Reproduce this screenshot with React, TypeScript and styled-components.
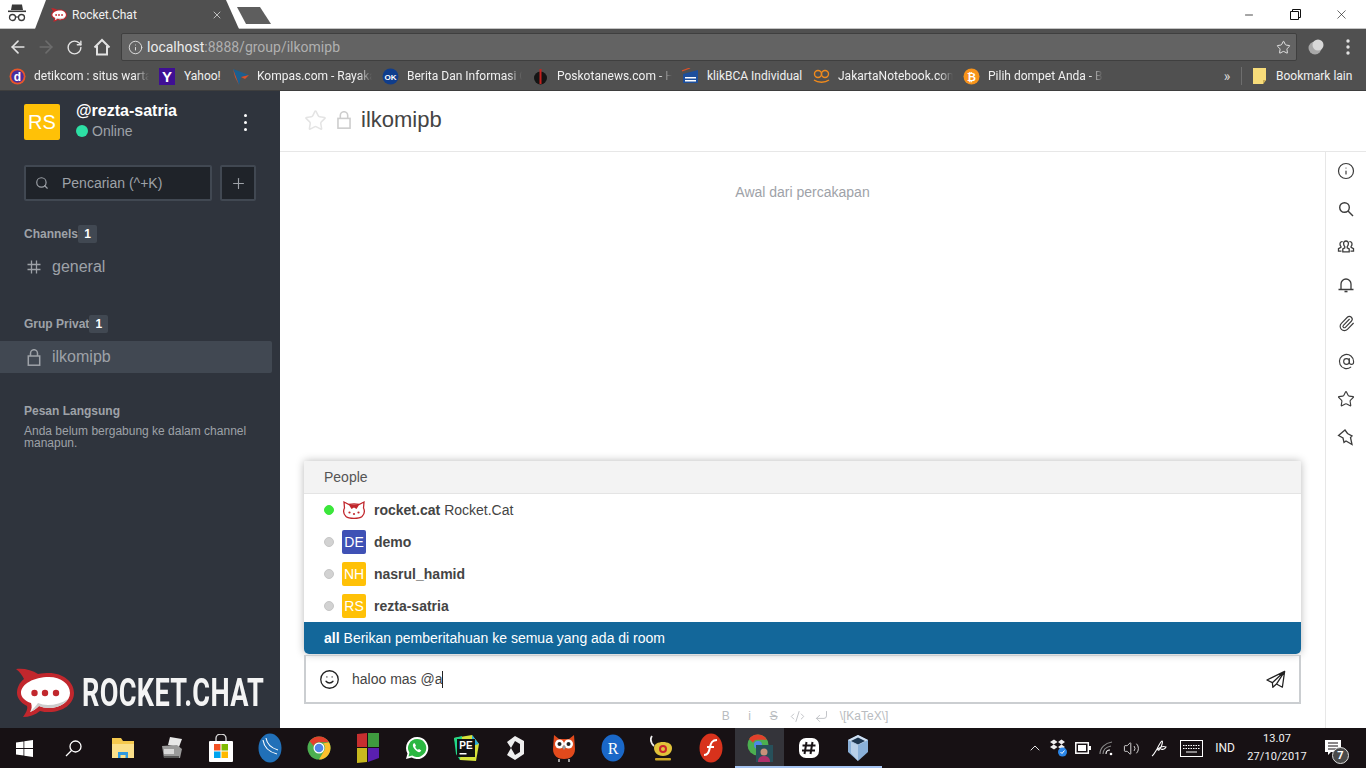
import React from 'react';
import styled, { createGlobalStyle } from 'styled-components';
import { ArrowLeft, ArrowRight, RotateCw, Info, Star, Search, Plus, Paperclip, AtSign, Smile, Minus, X, ChevronUp, Volume2, CodeXml, CornerDownLeft } from 'lucide-react';

const Global = createGlobalStyle`
  html, body { margin: 0; padding: 0; background: #fff; overflow: hidden; }
  * { box-sizing: border-box; }
`;

const Page = styled.div`
  width: 1366px; height: 768px; display: flex; flex-direction: column; overflow: hidden;
  font-family: "Liberation Sans", Arial, sans-serif; color: #444;
`;

/* ---------- browser chrome ---------- */
const TitleBar = styled.div`
  height: 29px; flex: none; display: flex; align-items: flex-end; background: #fff;
  box-shadow: inset 0 -1px 0 #c4c4c4;
`;
const Incognito = styled.div`
  width: 35px; height: 29px; display: flex; align-items: center; padding-left: 7px; padding-bottom: 3px;
`;
const Tab = styled.div`
  width: 204px; height: 29px; background: #505050; display: flex; align-items: center; padding: 0 16px;
  clip-path: polygon(0 100%, 11px 0, 191px 0, 204px 100%);
  font: 12px Roboto, sans-serif; color: #f0f0f0; gap: 5px;
`;
const TabTitle = styled.span`flex: 1;`;
const NewTab = styled.div`
  width: 34px; height: 17px; margin: 0 0 5px -2px; background: #5e5e5e;
  clip-path: polygon(0 0, 23px 0, 34px 100%, 9px 100%);
`;
const Flex1 = styled.div`flex: 1;`;
const WinControls = styled.div`display: flex; align-self: flex-start; height: 29px; padding-right: 2px;`;
const WinButton = styled.div`
  width: 46px; height: 29px; display: flex; align-items: center; justify-content: center; color: #111;
`;
const Toolbar = styled.div`
  height: 33px; flex: none; background: #505050; display: flex; align-items: center; padding: 3px 4px 0;
`;
const NavSlot = styled.div<{ $dim?: boolean; $w?: number }>`
  width: ${p => p.$w ?? 28}px; height: 28px; display: flex; align-items: center; justify-content: center;
  color: ${p => (p.$dim ? '#6c6c6c' : '#e2e2e2')};
`;
const Omnibox = styled.div`
  width: 1176px; height: 28px; margin-left: 5px; background: #636363; border: 1px solid #3f3f3f; border-radius: 2px;
  display: flex; align-items: center; padding: 0 5px 0 6px; font: 14px Roboto, sans-serif; color: #b0b0b0;
`;
const OmniText = styled.div`flex: 1; margin-left: 4px;`;
const Host = styled.span`color: #ececec;`;
const Bookmarks = styled.div`
  height: 29px; flex: none; background: #505050; border-bottom: 1px solid #3e3e3e; display: flex; align-items: center;
  padding-left: 9px; font: 12px Roboto, sans-serif; color: #f0f0f0;
`;
const Bookmark = styled.div<{ $w: number }>`
  width: ${p => p.$w}px; flex: none; display: flex; align-items: center; gap: 8px; overflow: hidden;
`;
const BookIcon = styled.div`width: 17px; height: 17px; flex: none; display: flex; align-items: center; justify-content: center;`;
const BookText = styled.span<{ $w?: number }>`
  white-space: nowrap; overflow: hidden; max-width: ${p => p.$w ?? 115}px;
  ${p => (p.$w ? '' : 'mask-image: linear-gradient(90deg, #000 88%, transparent 100%);')}
`;
const Chevrons = styled.div`margin-left: 103px; width: 22px; color: #d8d8d8; font: 14px Roboto, sans-serif; text-align: center;`;
const BookSep = styled.div`width: 1px; height: 18px; background: #6e6e6e; margin: 0 11px 0 3px;`;
const BookEnd = styled.div`display: flex; align-items: center; gap: 10px;`;

/* ---------- app ---------- */
const AppRow = styled.div`flex: 1; min-height: 0; display: flex;`;
const Sidebar = styled.aside`
  width: 280px; flex: none; background: #2f343d; display: flex; flex-direction: column; padding-top: 13px;
`;
const UserHead = styled.div`display: flex; padding: 0 24px; height: 36px; align-items: center;`;
const Avatar = styled.div<{ $bg: string; $size: number; $font: number }>`
  width: ${p => p.$size}px; height: ${p => p.$size}px; border-radius: 2px; background: ${p => p.$bg}; color: #fff;
  font-size: ${p => p.$font}px; display: flex; align-items: center; justify-content: center; flex: none;
`;
const UserInfo = styled.div`margin-left: 16px; flex: 1; display: flex; flex-direction: column; gap: 2px;`;
const UserName = styled.div`font-size: 16px; line-height: 18px; font-weight: 700; color: #fff; margin-top: -2px;`;
const UserStatus = styled.div`display: flex; align-items: center; gap: 4px; font-size: 14px; line-height: 18px; color: #9ea2a8;`;
const OnlineDot = styled.span`width: 12px; height: 12px; border-radius: 50%; background: #2de0a5;`;
const Kebab = styled.div`display: flex; flex-direction: column; gap: 4px; margin-right: 9px;`;
const KebabDot = styled.span`width: 3px; height: 3px; border-radius: 50%; background: #fff;`;
const SearchRow = styled.div`display: flex; gap: 8px; padding: 0 24px; margin-top: 25px;`;
const SearchBox = styled.div`
  width: 188px; height: 36px; background: #1f2329; border: 2px solid #414852; border-radius: 2px;
  display: flex; align-items: center; padding-left: 9px; gap: 13px; color: #9ea2a8; font-size: 14px;
`;
const AddBox = styled.div`
  width: 36px; height: 36px; background: #1f2329; border: 2px solid #414852; border-radius: 2px;
  display: flex; align-items: center; justify-content: center; color: #9ea2a8;
`;
const SectionTitle = styled.div<{ $mt: number }>`
  display: flex; align-items: center; height: 18px; padding-left: 24px; margin-top: ${p => p.$mt}px;
  font-size: 12px; font-weight: 700; color: #9ea2a8;
`;
const Badge = styled.span`
  width: 19px; height: 18px; background: #414852; border-radius: 2px; color: #fff; font-weight: 700; font-size: 12px;
  display: flex; align-items: center; justify-content: center;
`;
const RoomRow = styled.div<{ $active?: boolean }>`
  width: 272px; height: 32px; margin-top: 8px; display: flex; align-items: center; padding-left: 26px; gap: 10px;
  font-size: 16px; color: #9ea2a8; border-radius: 0 2px 2px 0; background: ${p => (p.$active ? '#414852' : 'transparent')};
`;
const NoDm = styled.div`
  margin-top: 5px; padding: 0 24px; font-size: 12px; line-height: 12px; color: #9ea2a8;
`;
const LogoRow = styled.div`
  margin-top: auto; height: 50px; margin-bottom: 10px; padding-left: 16px; display: flex; align-items: center; gap: 8px;
`;
const LogoMark = styled.div`width: 58px; height: 50px; flex: none; display: flex;`;
const LogoText = styled.span`
  display: inline-block; font: 700 39px/50px Roboto, sans-serif; color: #f4f4f4; transform: scaleX(0.695); transform-origin: left center;
  white-space: nowrap; letter-spacing: 0.5px; flex: none; width: 190px;
`;

const Content = styled.main`flex: 1; min-width: 0; display: flex; flex-direction: column;`;
const RoomHeader = styled.header`
  height: 61px; flex: none; border-bottom: 1px solid #e7e7e7; display: flex; align-items: center; padding: 0 0 2px 24px;
`;
const RoomName = styled.h1`margin: 0 0 0 10px; font-size: 22px; font-weight: 400; color: #444;`;
const RoomIcon = styled.div<{ $ml?: number }>`display: flex; margin-left: ${p => p.$ml ?? 0}px;`;
const ContentRow = styled.div`flex: 1; min-height: 0; display: flex;`;
const ChatCol = styled.div`flex: 1; min-width: 0; display: flex; flex-direction: column;`;
const Messages = styled.div`flex: 1; min-height: 0; display: flex; flex-direction: column; justify-content: space-between; padding-bottom: 1px;`;
const StartNote = styled.div`text-align: center; font-size: 14px; line-height: 16px; color: #9ea2a8; padding-top: 32px;`;
const Popup = styled.div`
  margin: 0 24px; background: #fff; border-radius: 2px 2px 5px 5px; overflow: hidden;
  box-shadow: 0 0 8px rgba(0,0,0,.28);
`;
const PopupTitle = styled.div`
  height: 33px; background: #f3f3f3; border-bottom: 1px solid #e4e4e4; padding-left: 20px; display: flex; align-items: center;
  font-size: 14px; color: #555;
`;
const PopupRow = styled.div`height: 32px; display: flex; align-items: center; padding-left: 20px; font-size: 14px; color: #444;`;
const StatusDot = styled.span<{ $on?: boolean }>`
  width: 10px; height: 10px; border-radius: 50%; margin-right: 8px; flex: none;
  background: ${p => (p.$on ? '#3be63b' : '#d2d2d2')}; border: 1px solid ${p => (p.$on ? '#3be63b' : '#c6c6c6')};
`;
const Strong = styled.b`font-weight: 700; margin-right: 4px;`;
const UserStrong = styled(Strong)`margin-left: 8px;`;
const ActiveRow = styled(PopupRow)`background: #13679a; color: #fff; margin-top: 0;`;
const CatWrap = styled.div`width: 24px; height: 24px; flex: none; display: flex; align-items: center;`;
const Composer = styled.div`
  height: 49px; flex: none; margin: 0 24px; border: 2px solid #cbced1; border-top-width: 1px; display: flex; align-items: center;
  padding: 0 13px 0 13px; font-size: 14px; color: #444;
`;
const ComposerText = styled.div`flex: 1; display: flex; align-items: center; margin-left: 12px;`;
const Caret = styled.span`width: 1px; height: 17px; background: #222; display: inline-block;`;
const FormatRow = styled.div`
  height: 24px; flex: none; display: flex; align-items: center; justify-content: center; gap: 12px; font-size: 12px; color: #b9bcc0; padding-left: 3px;
`;
const FormatMark = styled.span<{ $strike?: boolean }>`
  width: 12px; display: flex; justify-content: center; ${p => p.$strike && 'text-decoration: line-through;'}
  svg { flex: none; }
`;
const RightBar = styled.nav`
  width: 41px; flex: none; border-left: 1px solid #e7e7e7; display: flex; flex-direction: column; align-items: center; color: #3c3c3c;
`;
const RightIcon = styled.div`height: 38px; flex: none; display: flex; align-items: center; justify-content: center;`;

/* ---------- taskbar ---------- */
const Taskbar = styled.footer`
  height: 40px; flex: none; background: #171114; display: flex; align-items: stretch; color: #f2f2f2;
  font: 12px Roboto, sans-serif;
`;
const TaskSlot = styled.div<{ $w?: number; $running?: boolean; $active?: boolean }>`
  width: ${p => p.$w ?? 49}px; flex: none; display: flex; align-items: center; justify-content: center; position: relative;
  background: ${p => (p.$active ? '#34343a' : 'transparent')};
  ${p => p.$running && `box-shadow: inset 0 -2px 0 #a6c4f2;`}
`;
const ClockBox = styled.div`text-align: center; line-height: 18px; font-size: 11px; letter-spacing: 0.1px;`;
const NotifCount = styled.span`
  position: absolute; right: 8px; bottom: 4px; width: 17px; height: 17px; border-radius: 50%; background: #4a4a4a; border: 1px solid #ddd;
  color: #fff; font: 700 11px/15px Roboto, sans-serif; text-align: center;
`;

/* ---------- drawings ---------- */
const RocketMark = ({ w, h }: { w: number; h: number }) => (
  <svg width={w} height={h} viewBox="0 0 58 50">
    <path fill="#c1272d" d="M0 1C8 0 16 2 22 6 C26 5 30 5 33 5 C47 5 58 14 58 25 C58 36 47 44 33 44 C30 44 27 44 24 43 C19 47 13 49 7 49 C10 45 12 41 11 38 C5 35 1 30 1 25 C1 20 3 15 8 11 C6 7 4 4 0 1Z" />
    <path fill="#fff" d="M33 9C45 9 54 16 54 25 C54 33 45 40 33 40 C29 40 26 39 23 38 C20 41 17 43 14 44 C16 41 16 38 15 35 C9 33 5 29 5 25 C5 16 18 9 33 9Z" />
    <path fill="#ccc" d="M14 44 C17 43 20 41 23 38 C26 39 29 40 33 40 C42 40 49 36 52 31 C46 35 39 37 32 37 C28 37 25 36 22 35 C20 38 17 41 14 44Z" />
    <circle cx="18.5" cy="25" r="3.2" fill="#c1272d" /><circle cx="29" cy="25" r="3.2" fill="#c1272d" /><circle cx="40" cy="25" r="3.2" fill="#c1272d" />
  </svg>
);
const Spy = () => (
  <svg width="20" height="20" viewBox="0 0 20 20" fill="#3a3a3a">
    <path d="M5 1.5 H15 L16 7 H4Z" /><rect x="1" y="7.5" width="18" height="1.6" />
    <circle cx="5.5" cy="14.5" r="3" fill="none" stroke="#3a3a3a" strokeWidth="1.3" />
    <circle cx="14.5" cy="14.5" r="3" fill="none" stroke="#3a3a3a" strokeWidth="1.3" />
    <path d="M8.5 14 H11.5" stroke="#3a3a3a" strokeWidth="1.2" />
  </svg>
);
const Restore = () => (
  <svg width="11" height="11" viewBox="0 0 11 11" fill="none" stroke="#111"><path d="M.5 2.5h8v8h-8zM2.5 2.5v-2h8v8h-2" /></svg>
);
const HomeIcon = () => (
  <svg width="18" height="18" viewBox="0 0 18 18" fill="none" stroke="#e2e2e2" strokeWidth="2"><path d="M1.500 9.500 9 2l7.500 7.500M4 8v8.500h10V8" /></svg>
);
const Badge3d = () => (
  <svg width="18" height="18" viewBox="0 0 18 18"><circle cx="8" cy="10" r="6.500" fill="#a8a8a8" /><circle cx="11" cy="7" r="5.500" fill="#d8d8d8" /></svg>
);
const Dots = () => (
  <svg width="4" height="16" viewBox="0 0 4 16" fill="#e2e2e2"><circle cx="2" cy="2" r="1.700" /><circle cx="2" cy="8" r="1.700" /><circle cx="2" cy="14" r="1.700" /></svg>
);
const PageFolder = () => (
  <svg width="13" height="16" viewBox="0 0 13 16"><path d="M0 0h13v12l-3 4H0z" fill="#f7dc7a" /><path d="M13 12h-3v4z" fill="#c9ad55" /></svg>
);
const LockGlyph = ({ color, w, h }: { color: string; w: number; h: number }) => (
  <svg width={w} height={h} viewBox="0 0 13 17" fill="none" stroke={color} strokeWidth="1.500"><rect x=".8" y="7" width="11.400" height="9.200" /><path d="M3 7V4.200a3.500 3.500 0 0 1 7 0V7" /></svg>
);
const Fav = ({ kind }: { kind: string }) => {
  switch (kind) {
    case 'detik': return <svg width="17" height="17" viewBox="0 0 17 17"><circle cx="8.5" cy="8.5" r="8" fill="#e8562a" /><circle cx="8.5" cy="8.5" r="6.2" fill="#4a2c9c" /><text x="8.5" y="12.5" fontSize="12" fontWeight="700" fill="#fff" textAnchor="middle" fontFamily="Liberation Sans">d</text></svg>;
    case 'yahoo': return <svg width="17" height="17" viewBox="0 0 17 17"><rect width="16" height="17" fill="#3f0f94" /><text x="8" y="14" fontSize="15" fontWeight="700" fill="#fff" textAnchor="middle" fontFamily="Liberation Sans">Y</text></svg>;
    case 'kompas': return <svg width="17" height="17" viewBox="0 0 17 17"><path d="M1 1 17 7 9 9 7 17Z" fill="#1c5f8f" /><path d="M1 1 7 17 3 9Z" fill="#d8502a" /><path d="M17 7 9 9 13 11Z" fill="#d8502a" /></svg>;
    case 'ok': return <svg width="17" height="17" viewBox="0 0 17 17"><circle cx="8.5" cy="8.5" r="8" fill="#0f3d8c" /><text x="8.5" y="11.5" fontSize="8" fontWeight="700" fill="#fff" textAnchor="middle" fontFamily="Liberation Sans">OK</text></svg>;
    case 'pos': return <svg width="17" height="17" viewBox="0 0 17 17"><circle cx="8.5" cy="10" r="6.500" fill="#151515" /><rect x="7.500" y="1" width="2" height="15" fill="#c4221f" /></svg>;
    case 'bca': return <svg width="17" height="17" viewBox="0 0 17 17"><path d="M1 6 16 2V15H1Z" fill="#1d4f9c" /><path d="M3 9h11v1.500H3zM3 12h11v1.500H3z" fill="#fff" /><path d="M0 3 8 0" stroke="#d8502a" strokeWidth="1.300" /></svg>;
    case 'jakarta': return <svg width="17" height="17" viewBox="0 0 17 17" fill="none" stroke="#f08a1c" strokeWidth="1.400"><circle cx="5" cy="6" r="3.500" /><circle cx="12" cy="6" r="3.500" /><path d="M1 12c4 3 11 3 15 0" /></svg>;
    case 'btc': return <svg width="17" height="17" viewBox="0 0 17 17"><circle cx="8.5" cy="8.5" r="8" fill="#f7931a" /><text x="8.5" y="12.5" fontSize="11" fontWeight="700" fill="#fff" textAnchor="middle" fontFamily="Liberation Sans">₿</text></svg>;
    default: return null;
  }
};
const BOOKMARKS = [
  { k: 'detik', t: 'detikcom : situs warta', w: 150 },
  { k: 'yahoo', t: 'Yahoo!', w: 73, full: 40 },
  { k: 'kompas', t: 'Kompas.com - Rayakan', w: 150 },
  { k: 'ok', t: 'Berita Dan Informasi Ok', w: 150 },
  { k: 'pos', t: 'Poskotanews.com - Harian', w: 150 },
  { k: 'bca', t: 'klikBCA Individual', w: 131, full: 100 },
  { k: 'jakarta', t: 'JakartaNotebook.com', w: 150 },
  { k: 'btc', t: 'Pilih dompet Anda - Bitcoin', w: 150 },
];
const Hashish = () => (
  <svg width="16" height="16" viewBox="0 0 16 16" fill="none" stroke="#9ea2a8" strokeWidth="1.300"><path d="M5.500 1.500v13M10.500 1.500v13M1.500 5.500h13M1.500 10.500h13" /></svg>
);
const SearchThin = () => (
  <svg width="16" height="16" viewBox="0 0 16 16" fill="none" stroke="#3c3c3c" strokeWidth="1.400"><circle cx="6.500" cy="6.500" r="4.800" /><path d="M10 10l5 5" /></svg>
);
const Group = () => (
  <svg width="18" height="18" viewBox="0 0 18 18" fill="none" stroke="#3c3c3c" strokeWidth="1.300">
    <path d="M9 3a2.400 2.400 0 0 1 2.400 2.600c0 1.400-.6 2.400-1.200 3v1.200l2 1v3H5.800v-3l2-1V8.600c-.6-.6-1.200-1.600-1.200-3A2.400 2.400 0 0 1 9 3z" />
    <path d="M5.600 3.600C4 3.400 3 4.500 3 5.900c0 1.200.4 2 .9 2.500v1L1.500 10.600v2.500h3M12.400 3.600C14 3.400 15 4.500 15 5.900c0 1.200-.4 2-.9 2.500v1l2.400 1.200v2.500h-3" />
  </svg>
);
const BellLine = () => (
  <svg width="18" height="18" viewBox="0 0 18 18" fill="none" stroke="#3c3c3c" strokeWidth="1.300"><path d="M4 13V8a5 5 0 0 1 10 0v5M1.500 13.500h15" /><path d="M7.500 15.500h3" strokeWidth="1.600" /></svg>
);
const PinLine = () => (
  <svg width="18" height="18" viewBox="0 0 18 18" fill="none" stroke="#3c3c3c" strokeWidth="1.300"><path d="M1.500 7.500 8 2l2.500 3.500 4.500 2.500-1.500 1.500 1.500 7-6-3.500-2 1.500-1-4.500z" /></svg>
);
const Plane = () => (
  <svg width="20" height="19" viewBox="0 0 22 20" fill="none" stroke="#222" strokeWidth="1.400" strokeLinejoin="round"><path d="M1 10.500 20.500 1 18 18.500 11.500 15 7.500 18.500 7 13.500zM7 13.500 20.500 1 11.500 15" /></svg>
);
const RocketCat = () => (
  <svg width="24" height="20" viewBox="0 0 24 20" fill="none" stroke="#c1272d" strokeWidth="1.300">
    <path d="M2 2 7 4.500C10 3.800 14 3.800 17 4.500L22 2 21.500 8C23 11 22.500 14 20 16.500 17 19 7 19 4 16.500 1.500 14 1 11 2.500 8Z" fill="#fff" />
    <path d="M7 5C10 4.400 14 4.400 17 5L14.500 9 12 7.500 9.500 9Z" fill="#c1272d" stroke="none" />
    <circle cx="7.500" cy="12.500" r="1.100" fill="#c1272d" stroke="none" /><circle cx="12" cy="14" r="1.100" fill="#c1272d" stroke="none" /><circle cx="16.500" cy="12.500" r="1.100" fill="#c1272d" stroke="none" />
  </svg>
);
const WinLogo = () => (
  <svg width="17" height="17" viewBox="0 0 17 17" fill="#fff"><path d="M0 2.500 7.500 1.400V8H0zM8.300 1.300 17 0V8H8.300zM0 9h7.500v6.600L0 14.500zM8.300 9H17v8l-8.700-1.300z" /></svg>
);
const TaskSearch = () => (
  <svg width="18" height="18" viewBox="0 0 18 18" fill="none" stroke="#fff" strokeWidth="1.300"><circle cx="10.500" cy="7.500" r="5.500" /><path d="M6.500 11.500 1 17" /></svg>
);
const Explorer = () => (
  <svg width="22" height="22" viewBox="0 0 22 22"><path d="M0 1h9l2 3h11v17H0z" fill="#f5c94e" /><rect y="7" width="22" height="14" fill="#fbe08a" /><path d="M6 21v-6h10v6h-2.500v-3h-5v3z" fill="#2f9ae0" /></svg>
);
const Fax = () => (
  <svg width="22" height="24" viewBox="0 0 22 24"><path d="M9 1 21 3 18 11 7 9z" fill="#e8e8e8" /><path d="M1 10 16 9 21 13 19 22 3 22z" fill="#9a9a9a" /><path d="M3 13h10v5H3z" fill="#d8d8d8" /><path d="M3 20h15v2H3z" fill="#555" /></svg>
);
const Store = () => (
  <svg width="24" height="28" viewBox="0 0 24 28"><path d="M7 7V4a5 4 0 0 1 10 0v3" fill="none" stroke="#ddd" strokeWidth="1.300" /><rect y="7" width="24" height="21" rx="1" fill="#fff" /><rect x="5" y="10" width="6.500" height="6.500" fill="#f25022" /><rect x="12.500" y="10" width="6.500" height="6.500" fill="#7fba00" /><rect x="5" y="17.500" width="6.500" height="6.500" fill="#00a4ef" /><rect x="12.500" y="17.500" width="6.500" height="6.500" fill="#ffb900" /></svg>
);
const Mikro = () => (
  <svg width="24" height="30" viewBox="0 0 24 30"><ellipse cx="12" cy="15" rx="11.500" ry="14.500" fill="#2170b8" /><path d="M5 7c1 7 6 12 14 14M8 5c1 6 5 10 12 12" fill="none" stroke="#fff" strokeWidth="1.100" /></svg>
);
const Chrome = () => (
  <svg width="24" height="26" viewBox="0 0 24 24"><circle cx="12" cy="12" r="11.500" fill="#4caf50" /><path d="M12 .5a11.500 11.500 0 0 1 10 5.800H12a5.700 5.700 0 0 0-5.300 3.700L2.600 5.300A11.500 11.500 0 0 1 12 .5z" fill="#e2402b" /><path d="M22 6.300A11.500 11.500 0 0 1 12 23.500l5-8.500a5.700 5.700 0 0 0-1-7.500z" fill="#fbc02d" /><circle cx="12" cy="12" r="5.500" fill="#fff" /><circle cx="12" cy="12" r="4.300" fill="#4f86e8" /></svg>
);
const Tiles = () => (
  <svg width="22" height="30" viewBox="0 0 22 30"><path d="M0 1 10 0V14L0 14z" fill="#c62f2f" /><path d="M11 0 22 0V14L11 14z" fill="#3f9b3f" /><path d="M0 15h10v14L0 30z" fill="#c8b81e" /><path d="M11 15h11V25L11 29z" fill="#5a1fb0" /></svg>
);
const Whats = () => (
  <svg width="24" height="26" viewBox="0 0 24 24"><path d="M12 1a11 11 0 0 0-9.500 16.500L1 23l5.700-1.500A11 11 0 1 0 12 1z" fill="#fff" /><path d="M12 3a9 9 0 0 0-7.600 13.800L3.500 20.500l3.800-1A9 9 0 1 0 12 3z" fill="#2bb741" /><path d="M8.500 7.500c-1 1-1 3 1 5.500s4 3.500 5.500 3l1.300-1.500-2.300-1.500-1 .8c-1 0-2.500-1.800-2.800-3l.8-1L9.800 7.300z" fill="#fff" /></svg>
);
const PyCharmIcon = () => (
  <svg width="28" height="28" viewBox="0 0 28 28"><path d="M2 4 20 1 27 10 24 27 8 26z" fill="#d6e23a" /><path d="M20 1 27 10 20 12z" fill="#2aa8d8" /><path d="M2 4 10 2 8 26 4 20z" fill="#21d789" /><rect x="5" y="5" width="18" height="18" fill="#111" /><text x="14" y="15" fontSize="10" fontWeight="700" fill="#fff" textAnchor="middle" fontFamily="Liberation Sans">PE</text><rect x="7.500" y="19" width="7" height="1.500" fill="#fff" /></svg>
);
const Unity = () => (
  <svg width="18" height="24" viewBox="0 0 18 24"><path d="M9 0 18 5V18L9 24 1 19 5 12 1 6z" fill="#eee" /><path d="M9 5 5 12 9 19 14 16V8z" fill="#171114" /></svg>
);
const Owl = () => (
  <svg width="24" height="28" viewBox="0 0 24 28"><path d="M2 1 7 5H17L22 1 23 15C23 22 18 25 12 25 6 25 1 22 1 15z" fill="#e24a1c" /><circle cx="7.500" cy="10" r="4.500" fill="#fff" /><circle cx="16.500" cy="10" r="4.500" fill="#fff" /><circle cx="7.500" cy="10" r="2" fill="#222" /><circle cx="16.500" cy="10" r="2" fill="#222" /><path d="M12 11l-2 2 2 3 2-3z" fill="#999" /><path d="M7 25v3M17 25v3" stroke="#ccc" strokeWidth="1.500" /></svg>
);
const RLogo = () => (
  <svg width="24" height="28" viewBox="0 0 24 28"><ellipse cx="12" cy="14" rx="11.500" ry="13.500" fill="#1a68c8" /><text x="12" y="20" fontSize="16" fill="#fff" textAnchor="middle" fontFamily="Liberation Serif">R</text></svg>
);
const Teapot = () => (
  <svg width="24" height="28" viewBox="0 0 24 28"><path d="M2 2c-2 3-1 7 2 10" fill="none" stroke="#eee" strokeWidth="1.800" /><path d="M4 14c0-4 4-6 9-6s9 2 9 6-3 8-9 8-9-4-9-8z" fill="#e0c23a" /><circle cx="13" cy="15" r="4" fill="#c9252d" /><circle cx="13" cy="15" r="2" fill="#e0c23a" /><rect x="5" y="24" width="16" height="2.500" rx="1" fill="#c9a526" /></svg>
);
const Flash = () => (
  <svg width="24" height="30" viewBox="0 0 24 30"><ellipse cx="12" cy="15" rx="11.500" ry="14.500" fill="#d8321c" /><path d="M18 7c-5 0-6 3-7 7-1 5-2 8-6 8" fill="none" stroke="#fff" strokeWidth="2" /><path d="M8 14h7" stroke="#fff" strokeWidth="2" /></svg>
);
const ChromePhoto = () => (
  <svg width="26" height="28" viewBox="0 0 26 28"><circle cx="11" cy="11" r="10.500" fill="#4caf50" /><path d="M11 .5a10.500 10.500 0 0 1 9 5.300H11a5 5 0 0 0-5 3L2 5A10.500 10.500 0 0 1 11 .5z" fill="#e2402b" /><circle cx="11" cy="11" r="4" fill="#4f86e8" /><rect x="9" y="11" width="17" height="17" fill="#27505a" /><circle cx="17" cy="18" r="3.500" fill="#c9917a" /><path d="M11 28c0-5 3-6 6-6s6 1 6 6z" fill="#b0306a" /></svg>
);
const Slack = () => (
  <svg width="20" height="20" viewBox="0 0 20 20"><rect width="20" height="20" rx="7" fill="#fff" /><path d="M7.500 4l-2 12M13.500 4l-2 12M3.500 7.500h13M3 12.500h13" stroke="#171114" strokeWidth="2" /></svg>
);
const VBox = () => (
  <svg width="22" height="28" viewBox="0 0 22 28"><path d="M11 1 21 6V18L11 27 1 18V6z" fill="#8ab0d8" /><path d="M11 1 21 6 11 11 1 6z" fill="#cfe0f2" /><path d="M4 7l7-3.500L18 7l-7 3.500z" fill="#1d3650" /><path d="M11 11V27L4 19V8z" fill="#b8cfe8" /></svg>
);
const Dropboxy = () => (
  <svg width="18" height="18" viewBox="0 0 18 18" fill="#eee"><path d="M0 3 4 .5 7.500 3 3.800 5.500zM8 3 11.500.5 15 3 11.500 5.500zM0 8 3.800 5.500 7.500 8 4 10.500zM8 8l3.500-2.500L15 8l-3.500 2.500z" /><circle cx="12.500" cy="13" r="4.500" fill="#2a86e8" /><path d="M10.500 13l1.500 1.500 2.500-3" stroke="#fff" fill="none" /></svg>
);
const Batt = () => (
  <svg width="16" height="12" viewBox="0 0 16 12"><rect x=".8" y=".8" width="12.500" height="10.400" fill="none" stroke="#fff" strokeWidth="1.500" /><rect x="3" y="3" width="8" height="6" fill="#fff" /><rect x="14" y="4" width="2" height="4" fill="#fff" /></svg>
);
const Wifi = () => (
  <svg width="16" height="16" viewBox="0 0 16 16" fill="none" stroke="#8a8a8a" strokeWidth="1.100"><path d="M1 14C1 8 6 3 13 2M4 14c0-4 3-7 8-8" /><path d="M7 14c0-2 1-4 4-4" stroke="#fff" /><circle cx="12" cy="14" r="1.300" fill="#fff" stroke="none" /></svg>
);
const Pen = () => (
  <svg width="18" height="18" viewBox="0 0 18 18" fill="none" stroke="#fff" strokeWidth="1.100"><path d="M1 17c2-1 3-4 5-7 2-4 4-8 5-8s0 5-2 8c-1 2-3 1-2 0 2-2 5-3 8-2-1 2-3 3-5 2" /></svg>
);
const Keyboard = () => (
  <svg width="23" height="17" viewBox="0 0 23 17" fill="none" stroke="#fff"><rect x=".5" y=".5" width="22" height="16" /><path d="M3 5.500h17M3 8.500h17" strokeDasharray="1.500 1" /><path d="M6 12h11" /></svg>
);
const Notif = () => (
  <svg width="16" height="16" viewBox="0 0 16 16"><path d="M0 0h16v12H6l-3 3v-3H0z" fill="#fff" /><path d="M3 3h10M3 6h10M3 9h10" stroke="#171114" /></svg>
);

export default function App() {
  return (
    <Page>
      <Global />
      <TitleBar>
        <Incognito><Spy /></Incognito>
        <Tab>
          <RocketMark w={16} h={14} />
          <TabTitle>Rocket.Chat</TabTitle>
          <X size={12} color="#bdbdbd" />
        </Tab>
        <NewTab />
        <Flex1 />
        <WinControls>
          <WinButton><Minus size={12} strokeWidth={1.5} /></WinButton>
          <WinButton><Restore /></WinButton>
          <WinButton><X size={15} strokeWidth={1} /></WinButton>
        </WinControls>
      </TitleBar>
      <Toolbar>
        <NavSlot><ArrowLeft size={20} strokeWidth={2} /></NavSlot>
        <NavSlot $dim><ArrowRight size={20} strokeWidth={2} /></NavSlot>
        <NavSlot><RotateCw size={17} strokeWidth={2} /></NavSlot>
        <NavSlot><HomeIcon /></NavSlot>
        <Omnibox>
          <Info size={15} color="#e2e2e2" strokeWidth={1.5} />
          <OmniText><Host>localhost</Host>:8888/group/ilkomipb</OmniText>
          <Star size={15} color="#eaeaea" strokeWidth={1.5} />
        </Omnibox>
        <NavSlot $w={38}><Badge3d /></NavSlot>
        <NavSlot $w={26}><Dots /></NavSlot>
      </Toolbar>
      <Bookmarks>
        {BOOKMARKS.map(b => (
          <Bookmark key={b.k} $w={b.w}>
            <BookIcon><Fav kind={b.k} /></BookIcon>
            <BookText $w={b.full}>{b.t}</BookText>
          </Bookmark>
        ))}
        <Chevrons>»</Chevrons>
        <BookSep />
        <BookEnd>
          <PageFolder />
          <span>Bookmark lain</span>
        </BookEnd>
      </Bookmarks>
      <AppRow>
        <Sidebar>
          <UserHead>
            <Avatar $bg="#ffc107" $size={36} $font={20}>RS</Avatar>
            <UserInfo>
              <UserName>@rezta-satria</UserName>
              <UserStatus><OnlineDot />Online</UserStatus>
            </UserInfo>
            <Kebab><KebabDot /><KebabDot /><KebabDot /></Kebab>
          </UserHead>
          <SearchRow>
            <SearchBox><Search size={14} color="#9ea2a8" />Pencarian (^+K)</SearchBox>
            <AddBox><Plus size={17} strokeWidth={1.6} /></AddBox>
          </SearchRow>
          <SectionTitle $mt={24}>Channels<Badge>1</Badge></SectionTitle>
          <RoomRow><Hashish />general</RoomRow>
          <SectionTitle $mt={32}>Grup Privat<Badge>1</Badge></SectionTitle>
          <RoomRow $active><LockGlyph color="#9ea2a8" w={16} h={17} />ilkomipb</RoomRow>
          <SectionTitle $mt={29}>Pesan Langsung</SectionTitle>
          <NoDm>Anda belum bergabung ke dalam channel manapun.</NoDm>
          <LogoRow>
            <LogoMark><RocketMark w={58} h={50} /></LogoMark>
            <LogoText>ROCKET.CHAT</LogoText>
          </LogoRow>
        </Sidebar>
        <Content>
          <RoomHeader>
            <Star size={23} color="#e4e4e4" strokeWidth={1.6} />
            <RoomIcon $ml={10}><LockGlyph color="#cdcdcd" w={14} h={18} /></RoomIcon>
            <RoomName>ilkomipb</RoomName>
          </RoomHeader>
          <ContentRow>
            <ChatCol>
              <Messages>
                <StartNote>Awal dari percakapan</StartNote>
                <Popup>
                  <PopupTitle>People</PopupTitle>
                  <PopupRow><StatusDot $on /><CatWrap><RocketCat /></CatWrap><UserStrong>rocket.cat</UserStrong>Rocket.Cat</PopupRow>
                  <PopupRow><StatusDot /><Avatar $bg="#3f51b5" $size={24} $font={14}>DE</Avatar><UserStrong>demo</UserStrong></PopupRow>
                  <PopupRow><StatusDot /><Avatar $bg="#ffc107" $size={24} $font={14}>NH</Avatar><UserStrong>nasrul_hamid</UserStrong></PopupRow>
                  <PopupRow><StatusDot /><Avatar $bg="#ffc107" $size={24} $font={14}>RS</Avatar><UserStrong>rezta-satria</UserStrong></PopupRow>
                  <ActiveRow><Strong>all</Strong>Berikan pemberitahuan ke semua yang ada di room</ActiveRow>
                </Popup>
              </Messages>
              <Composer>
                <Smile size={21} color="#222" strokeWidth={1.5} />
                <ComposerText>haloo mas @a<Caret /></ComposerText>
                <Plane />
              </Composer>
              <FormatRow>
                <FormatMark>B</FormatMark>
                <FormatMark>i</FormatMark>
                <FormatMark $strike>S</FormatMark>
                <FormatMark><CodeXml size={15} strokeWidth={1.4} /></FormatMark>
                <FormatMark><CornerDownLeft size={15} strokeWidth={1.4} /></FormatMark>
                <span>\[KaTeX\]</span>
              </FormatRow>
            </ChatCol>
            <RightBar>
              <RightIcon><Info size={18} strokeWidth={1.6} /></RightIcon>
              <RightIcon><SearchThin /></RightIcon>
              <RightIcon><Group /></RightIcon>
              <RightIcon><BellLine /></RightIcon>
              <RightIcon><Paperclip size={17} strokeWidth={1.6} /></RightIcon>
              <RightIcon><AtSign size={17} strokeWidth={1.6} /></RightIcon>
              <RightIcon><Star size={18} strokeWidth={1.5} /></RightIcon>
              <RightIcon><PinLine /></RightIcon>
            </RightBar>
          </ContentRow>
        </Content>
      </AppRow>
      <Taskbar>
        <TaskSlot><WinLogo /></TaskSlot>
        <TaskSlot><TaskSearch /></TaskSlot>
        <TaskSlot><Explorer /></TaskSlot>
        <TaskSlot><Fax /></TaskSlot>
        <TaskSlot><Store /></TaskSlot>
        <TaskSlot><Mikro /></TaskSlot>
        <TaskSlot><Chrome /></TaskSlot>
        <TaskSlot><Tiles /></TaskSlot>
        <TaskSlot><Whats /></TaskSlot>
        <TaskSlot><PyCharmIcon /></TaskSlot>
        <TaskSlot><Unity /></TaskSlot>
        <TaskSlot><Owl /></TaskSlot>
        <TaskSlot><RLogo /></TaskSlot>
        <TaskSlot><Teapot /></TaskSlot>
        <TaskSlot><Flash /></TaskSlot>
        <TaskSlot $running $active><ChromePhoto /></TaskSlot>
        <TaskSlot $running><Slack /></TaskSlot>
        <TaskSlot $running><VBox /></TaskSlot>
        <Flex1 />
        <TaskSlot $w={24}><ChevronUp size={16} strokeWidth={1.4} /></TaskSlot>
        <TaskSlot $w={24}><Dropboxy /></TaskSlot>
        <TaskSlot $w={24}><Batt /></TaskSlot>
        <TaskSlot $w={24}><Wifi /></TaskSlot>
        <TaskSlot $w={24}><Volume2 size={17} strokeWidth={1.2} /></TaskSlot>
        <TaskSlot $w={34}><Pen /></TaskSlot>
        <TaskSlot $w={28}><Keyboard /></TaskSlot>
        <TaskSlot $w={40}>IND</TaskSlot>
        <TaskSlot $w={64}><ClockBox>13.07<br />27/10/2017</ClockBox></TaskSlot>
        <TaskSlot $w={48}><Notif /><NotifCount>7</NotifCount></TaskSlot>
        <TaskSlot $w={9} />
      </Taskbar>
    </Page>
  );
}
